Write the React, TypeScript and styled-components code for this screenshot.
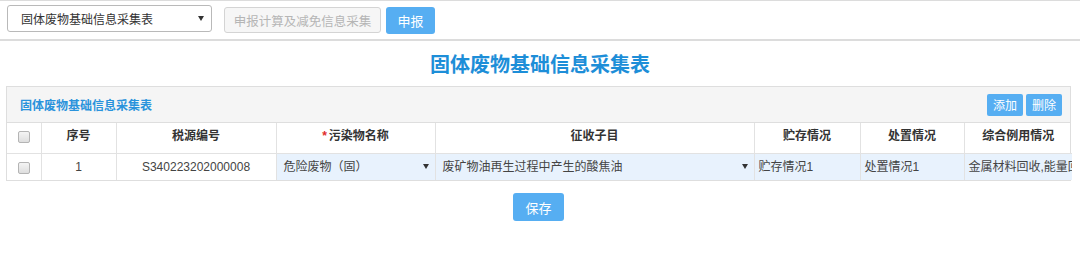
import { FC } from 'react';
import styled, { createGlobalStyle } from 'styled-components';

const GlobalStyle = createGlobalStyle`
  body {
    margin: 0;
    background: #fff;
    font-family: "Liberation Sans", "Noto Sans CJK SC", sans-serif;
    color: #333;
  }
`;

const columns = [
  { title: '', width: 34 },
  { title: '序号', width: 75 },
  { title: '税源编号', width: 160 },
  { title: '污染物名称', width: 159, required: true },
  { title: '征收子目', width: 319 },
  { title: '贮存情况', width: 106 },
  { title: '处置情况', width: 104 },
  { title: '综合例用情况', width: 108 },
];

const App: FC = () => {
  return (
    <>
      <GlobalStyle />
      <Toolbar>
        <FormSelect>
          <span>固体废物基础信息采集表</span>
          <Caret />
        </FormSelect>
        <GhostButton>申报计算及减免信息采集</GhostButton>
        <BlueButton>申报</BlueButton>
      </Toolbar>
      <PageTitle>固体废物基础信息采集表</PageTitle>
      <Panel>
        <PanelHeader>
          <PanelTitle>固体废物基础信息采集表</PanelTitle>
          <PanelActions>
            <SmallButton>添加</SmallButton>
            <SmallButton>删除</SmallButton>
          </PanelActions>
        </PanelHeader>
        <Table>
          <colgroup>
            {columns.map((c, i) => <col key={i} style={{ width: c.width }} />)}
          </colgroup>
          <thead>
            <tr>
              {columns.map((c, i) => (
                <Th key={i}>
                  {i === 0 ? <Check type="checkbox" /> : (
                    <>{c.required && <Star>*</Star>}{c.title}</>
                  )}
                </Th>
              ))}
            </tr>
          </thead>
          <tbody>
            <tr>
              <Td $center><Check type="checkbox" /></Td>
              <Td $center>1</Td>
              <Td $center>S340223202000008</Td>
              <Td $input>
                <CellSelect>
                  <span>危险废物（固）</span>
                  <Caret />
                </CellSelect>
              </Td>
              <Td $input>
                <CellSelect>
                  <span>废矿物油再生过程中产生的酸焦油</span>
                  <Caret />
                </CellSelect>
              </Td>
              <Td $input><CellText>贮存情况1</CellText></Td>
              <Td $input><CellText>处置情况1</CellText></Td>
              <Td $input><CellText>金属材料回收,能量回收</CellText></Td>
            </tr>
          </tbody>
        </Table>
      </Panel>
      <Footer>
        <SaveButton>保存</SaveButton>
      </Footer>
    </>
  );
}

export default App;

const Toolbar = styled.div`
  display: flex;
  align-items: center;
  height: 38px;
  border-top: 1px solid #dcdcdc;
  border-bottom: 2px solid #dcdcdc;
  padding-left: 7px;
`;

const FormSelect = styled.div`
  display: flex;
  align-items: center;
  justify-content: space-between;
  box-sizing: border-box;
  width: 205px;
  height: 27px;
  margin-top: -3px;
  padding: 0 7px 0 13px;
  border: 1px solid #b9b9b9;
  border-radius: 3px;
  font-size: 12px;
  color: #333;
`;

const Caret = styled.i`
  width: 0;
  height: 0;
  border-left: 3px solid transparent;
  border-right: 3px solid transparent;
  border-top: 5px solid #333;
`;

const GhostButton = styled.div`
  display: flex;
  align-items: center;
  justify-content: center;
  box-sizing: border-box;
  width: 157px;
  height: 26px;
  margin-left: 12px;
  border: 1px solid #d4d4d4;
  border-radius: 3px;
  background: #f6f6f6;
  color: #b5b5b5;
  font-size: 12.5px;
`;

const BlueButton = styled.div`
  display: flex;
  align-items: center;
  justify-content: center;
  width: 49px;
  height: 27px;
  margin-left: 5px;
  border-radius: 3px;
  background: #56aef2;
  color: #fff;
  font-size: 13px;
`;

const PageTitle = styled.div`
  height: 45px;
  display: flex;
  align-items: center;
  justify-content: center;
  font-size: 20px;
  font-weight: bold;
  color: #1d8ed8;
`;

const Panel = styled.div`
  margin: 0 9px 0 6px;
  border: 1px solid #dedede;
`;

const PanelHeader = styled.div`
  display: flex;
  align-items: center;
  justify-content: space-between;
  height: 35px;
  padding: 0 8px 0 13px;
  background: #f5f5f5;
  border-bottom: 1px solid #dedede;
`;

const PanelTitle = styled.div`
  font-size: 12px;
  font-weight: bold;
  color: #2a93dc;
`;

const PanelActions = styled.div`
  display: flex;
  gap: 3px;
`;

const SmallButton = styled.div`
  display: flex;
  align-items: center;
  justify-content: center;
  width: 36px;
  height: 22px;
  border-radius: 2px;
  background: #56aef2;
  color: #fff;
  font-size: 12px;
`;

const Table = styled.table`
  width: 100%;
  table-layout: fixed;
  border-collapse: collapse;
  font-size: 12px;
  line-height: 16px;
`;

const Th = styled.th`
  box-sizing: border-box;
  height: 30px;
  padding: 0 4px 3px;
  border-left: 1px solid #e2e2e2;
  border-bottom: 1px solid #e2e2e2;
  font-weight: bold;
  color: #333;
  text-align: center;
  white-space: nowrap;
  overflow: hidden;
  &:first-child { border-left: none; }
`;

const Star = styled.span`
  color: #e02b2b;
  margin-right: 2px;
`;

const Td = styled.td<{ $center?: boolean; $input?: boolean }>`
  box-sizing: border-box;
  height: 27px;
  padding: 0;
  border-left: 1px solid #e2e2e2;
  text-align: ${p => p.$center ? 'center' : 'left'};
  background: ${p => p.$input ? '#e8f2fd' : '#fff'};
  color: #444;
  white-space: nowrap;
  overflow: hidden;
  &:first-child { border-left: none; }
`;

const Check = styled.input`
  appearance: none;
  box-sizing: border-box;
  width: 12px;
  height: 12px;
  margin: 0;
  vertical-align: middle;
  border: 1px solid #b4b4b4;
  border-radius: 2px;
  background: linear-gradient(#f4f4f4, #dedede);
`;

const CellSelect = styled.div`
  display: flex;
  align-items: center;
  justify-content: space-between;
  padding: 0 6px 0 7px;
  color: #444;
`;

const CellText = styled.div`
  padding-left: 4px;
  overflow: hidden;
  white-space: nowrap;
`;

const Footer = styled.div`
  display: flex;
  justify-content: center;
  padding-top: 12px;
`;

const SaveButton = styled.div`
  display: flex;
  align-items: center;
  justify-content: center;
  width: 51px;
  height: 28px;
  margin-left: -3px;
  border-radius: 3px;
  background: #56aef2;
  color: #fff;
  font-size: 13px;
`;
